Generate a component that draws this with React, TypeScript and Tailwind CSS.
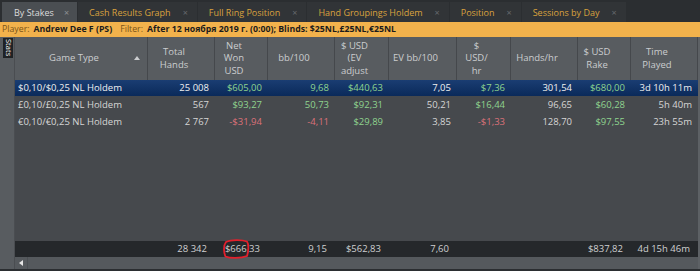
import React from "react";

type Cell = { v: string; c?: string };

const cols = [
  { label: ["Game Type"], sort: true },
  { label: ["Total", "Hands"] },
  { label: ["Net", "Won", "USD"] },
  { label: ["bb/100"] },
  { label: ["$ USD", "(EV", "adjust"] },
  { label: ["EV bb/100"] },
  { label: ["$", "USD/", "hr"] },
  { label: ["Hands/hr"] },
  { label: ["$ USD", "Rake"] },
  { label: ["Time", "Played"] },
];

const G = "text-[#8fd48f]";
const R = "text-[#dc7179]";

const rows: { selected?: boolean; cells: Cell[] }[] = [
  {
    selected: true,
    cells: [
      { v: "$0,10/$0,25 NL Holdem" },
      { v: "25 008" },
      { v: "$605,00", c: G },
      { v: "9,68", c: G },
      { v: "$440,63", c: G },
      { v: "7,05" },
      { v: "$7,36", c: G },
      { v: "301,54" },
      { v: "$680,00", c: G },
      { v: "3d 10h 11m" },
    ],
  },
  {
    cells: [
      { v: "£0,10/£0,25 NL Holdem" },
      { v: "567" },
      { v: "$93,27", c: G },
      { v: "50,73", c: G },
      { v: "$92,31", c: G },
      { v: "50,21" },
      { v: "$16,44", c: G },
      { v: "96,65" },
      { v: "$60,28", c: G },
      { v: "5h 40m" },
    ],
  },
  {
    cells: [
      { v: "€0,10/€0,25 NL Holdem" },
      { v: "2 767" },
      { v: "-$31,94", c: R },
      { v: "-4,11", c: R },
      { v: "$29,89", c: G },
      { v: "3,85" },
      { v: "-$1,33", c: R },
      { v: "128,70" },
      { v: "$97,55", c: G },
      { v: "23h 55m" },
    ],
  },
];

const totals = ["", "28 342", "$666,33", "9,15", "$562,83", "7,60", "", "", "$837,82", "4d 15h 46m"];

const tabs = ["By Stakes", "Cash Results Graph", "Full Ring Position", "Hand Groupings Holdem", "Position", "Sessions by Day"];

const gridCols = "grid grid-cols-[133px_67px_53px_67px_54px_68px_54px_67px_53px_67px]";

export default function App() {
  return (
    <div
      className="w-[700px] h-[271px] overflow-hidden flex flex-col bg-[#2b2e31] text-[9.5px] leading-none"
      style={{ fontFamily: '"Open Sans", "Noto Sans", sans-serif' }}
    >
      {/* Tabs */}
      <div className="h-[22px] flex items-end pl-[2px] gap-px">
        {tabs.map((t, i) => (
          <div
            key={t}
            className={
              i === 0
                ? "h-[20px] flex items-center pl-[12px] pr-[8px] bg-[#4a4e52] text-[#dcdcdc]"
                : "h-[20px] flex items-center pl-[11px] pr-[9px] bg-[#313437] text-[#d9a23e]"
            }
          >
            <span className="text-[9px]">{t}</span>
            <span className={i === 0 ? "ml-[10px] text-[9px] text-[#8d9094]" : "ml-[12px] text-[9px] text-[#66696d]"}>×</span>
          </div>
        ))}
      </div>

      {/* Filter bar */}
      <div className="h-[15px] bg-[#f2b24c] flex items-center pl-[2px] text-[8.75px] text-[#1c1c1c] whitespace-nowrap">
        <span className="text-[#7a5418]">Player:</span>
        <span className="ml-1 font-bold">Andrew Dee F (PS)</span>
        <span className="ml-2 text-[#7a5418]">Filter:</span>
        <span className="ml-1 font-bold">After 12 ноября 2019 г. (0:00); Blinds: $25NL,£25NL,€25NL</span>
      </div>

      {/* Main */}
      <div className="flex-1 flex bg-[#585c60]">
        <div className="w-[15px] border-r border-[#4a4d51] pt-[1px]">
          <div className="ml-[3px] w-[10px] h-[20px] bg-[#1f2225] flex items-center justify-center">
            <span className="text-[7.5px] text-white [writing-mode:vertical-rl]">Stats</span>
          </div>
        </div>

        <div className="w-[683px] flex flex-col">
          {/* Header */}
          <div className={`${gridCols} h-[43px] bg-[#585c60] text-[#cbcdcf]`}>
            {cols.map((c, i) => (
              <div key={i} className="relative flex items-center justify-center pr-[14px] border-r border-[#45484c] text-center leading-[12.5px]">
                <div>
                  {c.label.map((l) => (
                    <div key={l}>{l}</div>
                  ))}
                </div>
                {c.sort && (
                  <svg className="absolute right-[7px] top-[19px]" width="6" height="4" viewBox="0 0 6 4">
                    <path d="M3 0 L6 4 L0 4 Z" fill="#cbcdcf" />
                  </svg>
                )}
              </div>
            ))}
          </div>

          {/* Body */}
          <div className="flex-1 bg-[#46494d]">
            {rows.map((r, ri) => (
              <div
                key={ri}
                className={
                  r.selected
                    ? `${gridCols} h-[16px] bg-gradient-to-b from-[#1a3d72] to-[#0a2a5a] items-center`
                    : `${gridCols} h-[17px] items-center`
                }
              >
                {r.cells.map((c, ci) => (
                  <div
                    key={ci}
                    className={`${ci === 0 ? "pl-[3px] text-left" : "pr-[6px] text-right"} ${
                      c.c ?? (r.selected ? "text-[#f0f0f0]" : "text-[#d6d6d6]")
                    } whitespace-nowrap`}
                  >
                    {c.v}
                  </div>
                ))}
              </div>
            ))}
          </div>

          {/* Totals */}
          <div className={`${gridCols} h-[16px] bg-[#25282b] items-center text-[#cfd0d1] relative`}>
            {totals.map((t, i) => (
              <div key={i} className="pr-[8px] text-right whitespace-nowrap">
                {t}
              </div>
            ))}
            <svg className="absolute left-[207px] top-[-2px]" width="28" height="20" viewBox="0 0 28 20">
              <path
                d="M4 3 C9 0.5 20 0.5 25 2.5 C27 5 26.5 13 25 17 C19 19.5 8 19.5 3.5 17.5 C1.5 13 1.5 6 4 3 Z"
                fill="none"
                stroke="#e3202c"
                strokeWidth="1.8"
              />
            </svg>
          </div>

          {/* Scrollbar */}
          <div className="h-[12px] flex bg-[#55595d]">
            <div className="w-[13px] flex items-center justify-center border-r border-[#4b4f53]">
              <svg width="4" height="6" viewBox="0 0 4 6">
                <path d="M4 0 L0 3 L4 6 Z" fill="#e6e6e6" />
              </svg>
            </div>
          </div>
        </div>

        <div className="w-[2px] bg-[#5d6165]" />
      </div>
      <div className="h-[2px] bg-[#2b2e31]" />
    </div>
  );
}
